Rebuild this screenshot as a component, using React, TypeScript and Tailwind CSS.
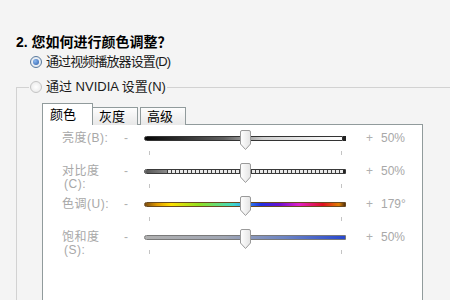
import React from "react";

function Thumb() {
  return (
    <svg width="11" height="20" viewBox="0 0 11 20" className="absolute left-[96px] top-[1px]">
      <defs>
        <linearGradient id="tg" x1="0" y1="0" x2="1" y2="0">
          <stop offset="0" stopColor="#ffffff" />
          <stop offset="1" stopColor="#e4e4e4" />
        </linearGradient>
      </defs>
      <path d="M0.5 2 Q0.5 0.5 2 0.5 H9 Q10.5 0.5 10.5 2 V14 L5.5 19.5 L0.5 14 Z" fill="url(#tg)" stroke="#9a9a9a" strokeWidth="1" />
    </svg>
  );
}

function Row({ label, label2, track, value }: { label: string; label2?: string; track: React.ReactNode; value: string }) {
  return (
    <div className="flex h-[33px] items-start">
      <div className="ml-[19px] mt-[3px] w-[62px] text-[12px] leading-[13px] tracking-[0.5px] text-[#a8a8a8]">
        <div>{label}</div>
        {label2 && <div className="pl-[2px]">{label2}</div>}
      </div>
      <div className="mt-[3px] w-[20px] text-[12px] leading-[13px] text-[#b0b0b0]">-</div>
      <div className="relative h-[33px] w-[202px]">
        <div className="absolute left-0 top-[7px] h-[5px] w-[202px]">{track}</div>
        <div className="absolute left-[5px] top-[22px] h-[4px] w-px bg-[#c4c4c4]" />
        <div className="absolute left-[197px] top-[22px] h-[4px] w-px bg-[#c4c4c4]" />
        <Thumb />
      </div>
      <div className="ml-[20px] mt-[3px] w-[15px] text-[12px] leading-[13px] text-[#b0b0b0]">+</div>
      <div className="mt-[3px] text-[12px] leading-[13px] text-[#a8a8a8]">{value}</div>
    </div>
  );
}

export default function App() {
  return (
    <div className="h-[300px] w-[450px] overflow-hidden bg-[#f4f4f4] font-['Liberation_Sans','Noto_Sans_CJK_SC',sans-serif] text-[#1a1a1a]">
      <div className="pl-[16px] pt-[33px]">
        <div className="text-[14px] font-bold leading-[18px] text-black">2. 您如何进行颜色调整？</div>
        <div className="ml-[14px] mt-[1px] flex h-[20px] items-center gap-[4px]">
          <div className="flex h-[12px] w-[12px] items-center justify-center rounded-full border border-[#5a7a9c] bg-[radial-gradient(circle,#ffffff,#d8e0ea)]">
            <div className="h-[6px] w-[6px] rounded-full bg-[radial-gradient(circle_at_35%_35%,#8ab8f0,#2a5ca8)]" />
          </div>
          <span className="text-[13px] tracking-[-0.9px]">通过视频播放器设置(D)</span>
        </div>
        <fieldset className="mt-[5px] h-[300px] w-[440px] border-l border-t border-[#d2d2d2]">
          <legend className="ml-[12px] px-[1px]">
            <div className="flex h-[20px] items-center gap-[4px]">
              <div className="h-[12px] w-[12px] rounded-full border border-[#c4c4c4] bg-[radial-gradient(circle,#ffffff,#e6e6e6)]" />
              <span className="text-[13px]">通过 NVIDIA 设置(N)</span>
            </div>
          </legend>
          <div className="pl-[25px] pt-[6px]">
            <div className="relative z-10 -mb-px flex items-end">
              <div className="flex h-[22px] w-[51px] items-center border border-b-0 border-[#919b9c] bg-white pl-[7px] text-[13px] text-black">颜色</div>
              <div className="flex h-[18px] w-[45px] items-center border border-b-0 border-l-0 border-[#919b9c] bg-[linear-gradient(to_bottom,#fdfdfd,#e8e8e8)] pl-[6px] text-[13px] text-black">灰度</div>
              <div className="ml-[2px] flex h-[18px] w-[46px] items-center border border-b-0 border-[#919b9c] bg-[linear-gradient(to_bottom,#fdfdfd,#e8e8e8)] pl-[6px] text-[13px] text-black">高级</div>
            </div>
            <div className="h-[240px] w-[381px] border border-[#919b9c] bg-white pt-[4px]">
              <Row
                label="亮度(B):"
                value="50%"
                track={
                  <div className="flex h-[5px]">
                    <div className="h-[5px] flex-1 rounded-l-full border border-[#333] bg-[linear-gradient(to_right,#050505,#606060_40%,#d0d0d0_60%,#fbfbfb_96%)]" />
                    <div className="h-[5px] w-[3px] bg-[#222]" />
                  </div>
                }
              />
              <Row
                label="对比度"
                label2="(C):"
                value="50%"
                track={
                  <div className="flex h-[5px] overflow-hidden rounded-l-full border border-[#3a3a3a]">
                    <div className="h-full w-[22px] bg-[linear-gradient(to_right,#555,#8a8a8a)]" />
                    <div className="h-full flex-1 bg-[repeating-linear-gradient(to_right,#3c3c3c_0_1px,#e8e8e8_1px_4px)]" />
                    <div className="h-full w-[2px] bg-[#222]" />
                  </div>
                }
              />
              <Row
                label="色调(U):"
                value="179°"
                track={
                  <div className="h-[5px] rounded-l-full border border-[#6a4a20] bg-[linear-gradient(to_right,#7a4a10,#e09a00_6%,#ffe000_13%,#90e020_27%,#40d8c8_44%,#3aa8f0_49%,#2030e0_58%,#6a10d0_67%,#e020c8_77%,#e01020_89%,#e08000_97%,#503010)]" />
                }
              />
              <Row
                label="饱和度"
                label2="(S):"
                value="50%"
                track={
                  <div className="h-[5px] rounded-l-full border border-[#7a7a7a] bg-[linear-gradient(to_right,#b0b0b0,#a0a6b4_40%,#6c84c4_70%,#2848d0_100%)]" />
                }
              />
            </div>
          </div>
        </fieldset>
      </div>
    </div>
  );
}
